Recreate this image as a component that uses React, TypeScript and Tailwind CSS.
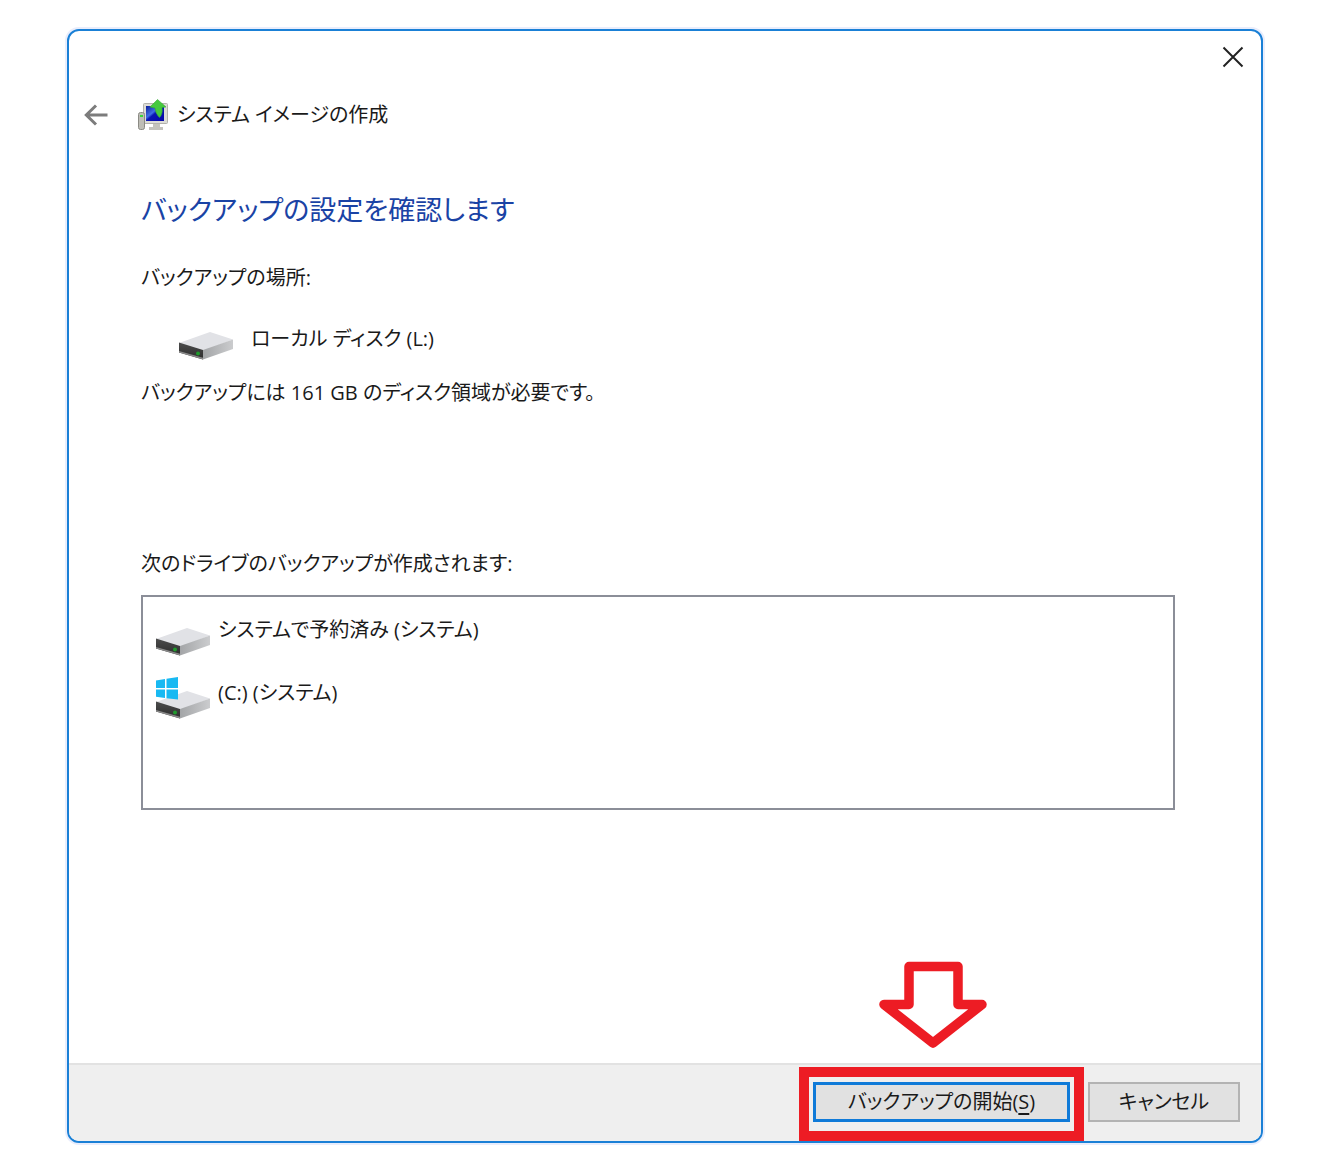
import type { ReactNode } from "react";

const DRIVES: { label: string; system: boolean }[] = [
  { label: "システムで予約済み (システム)", system: false },
  { label: "(C:) (システム)", system: true },
];

function DriveIcon({ system = false }: { system?: boolean }) {
  return (
    <svg viewBox="0 0 54 42" className="h-[42px] w-[54px] shrink-0" aria-hidden="true">
      <defs>
        <linearGradient id="drive-side" x1="0" y1="0" x2="1" y2="0">
          <stop offset="0" stopColor="#a3a5a7" />
          <stop offset="1" stopColor="#cbccce" />
        </linearGradient>
        <linearGradient id="drive-front" x1="0" y1="0" x2="0" y2="1">
          <stop offset="0" stopColor="#4c4c4c" />
          <stop offset="1" stopColor="#2c2c2c" />
        </linearGradient>
      </defs>
      <path d="M0 25 L31 14 L54 21.5 L24 33 Z" fill="#e1e2e6" />
      <path d="M24 32 L54 21.5 V31 L24 41.5 Z" fill="url(#drive-side)" />
      <path d="M0 24.500 L24 32 V41.500 L0 34.500 Z" fill="url(#drive-front)" />
      <path d="M0 34.500 L24 41.500 V39.800 L0 33 Z" fill="#8a8a8a" />
      <circle cx="19" cy="35.500" r="2" fill="#1f9a2c" />
      {system && (
        <g fill="#18b9f2">
          <path d="M0 3.500 L9 2 V11 H0 Z" />
          <path d="M10.500 1.800 L22 0 V11 H10.500 Z" />
          <path d="M0 12.500 H9 V21 L0 19.800 Z" />
          <path d="M10.500 12.500 H22 V22.500 L10.500 21.200 Z" />
        </g>
      )}
    </svg>
  );
}

function BackupIcon() {
  return (
    <svg viewBox="0 0 32 32" className="h-8 w-8 shrink-0" aria-hidden="true">
      <defs>
        <linearGradient id="screen" x1="0" y1="0" x2="1" y2="1">
          <stop offset="0" stopColor="#0a1a9a" />
          <stop offset="0.400" stopColor="#3f6fe6" />
          <stop offset="0.500" stopColor="#0a14b4" />
          <stop offset="1" stopColor="#0508a8" />
        </linearGradient>
      </defs>
      <rect x="6.500" y="4.500" width="24" height="20" rx="1" fill="#dcdcd6" stroke="#b3b2ac" />
      <rect x="9" y="7" width="18" height="15" fill="url(#screen)" />
      <path d="M16 25 H23 V28 H26 V31 H12 V28 H16 Z" fill="#c4c3bd" />
      <rect x="1.500" y="13.500" width="6" height="17" rx="2" fill="#bebdb6" stroke="#8b8a84" />
      <rect x="3" y="16" width="3" height="2" fill="#39d63a" />
      <path d="M20.500 0.500 L29 8 L25 8.500 Q26 15 22.500 18.500 Q18.500 15 18 9 L13 8 Z" fill="#45c93e" stroke="#38a834" strokeWidth="0.600" />
    </svg>
  );
}

function Line({ children }: { children: ReactNode }) {
  return <p className="text-[20px] leading-8">{children}</p>;
}

export default function App() {
  return (
    <div className="flex min-h-screen flex-col bg-white pt-[29px] pr-[77px] pb-[13px] pl-[67px] font-['Open_Sans','Noto_Sans_CJK_JP',sans-serif] text-[#1a1a1a] [font-feature-settings:'palt']">
      <div
        lang="ja"
        className="flex flex-1 flex-col overflow-hidden rounded-xl border-2 border-[#1a80d6] bg-white shadow-[0_0_0_2px_#e9edfc]"
      >
        <div className="flex justify-end px-4 pt-[14px]">
          <button type="button" aria-label="閉じる" className="flex h-6 w-6 items-center justify-center">
            <svg viewBox="0 0 24 24" className="h-6 w-6" fill="none" stroke="#222" strokeWidth="2">
              <path d="M2.500 2.500 L21.500 21.500 M21.500 2.500 L2.500 21.500" />
            </svg>
          </button>
        </div>

        <header className="mt-[30px] flex items-center px-[14px]">
          <button type="button" aria-label="戻る" className="mr-[26px] flex h-7 w-7 items-center justify-center">
            <svg viewBox="0 0 28 28" className="h-7 w-7" fill="none" stroke="#7c7c7c" strokeWidth="3">
              <path d="M24.500 14 H3.500 M13 4.500 L3.300 14 L13 23.500" />
            </svg>
          </button>
          <BackupIcon />
          <span className="ml-2 text-[20px] leading-8">システム イメージの作成</span>
        </header>

        <main className="flex flex-1 flex-col pr-[86px] pl-[72px]">
          <h1 className="mt-[59px] text-[27px] leading-10 text-[#1a43a5]">バックアップの設定を確認します</h1>
          <div className="mt-8">
            <Line>バックアップの場所:</Line>
          </div>
          <div className="mt-6 flex items-center gap-[18px] pl-[38px]">
            <DriveIcon />
            <Line>ローカル ディスク (L:)</Line>
          </div>
          <div className="mt-[17px]">
            <Line>バックアップには 161 GB のディスク領域が必要です。</Line>
          </div>

          <div className="mt-[139px]">
            <Line>次のドライブのバックアップが作成されます:</Line>
          </div>
          <ul className="mt-[15px] flex min-h-[215px] flex-col gap-[21px] border-2 border-[#8b8e98] px-[13px] pt-[17px]">
            {DRIVES.map((drive) => (
              <li key={drive.label} className="flex items-start gap-2">
                <DriveIcon system={drive.system} />
                <Line>{drive.label}</Line>
              </li>
            ))}
          </ul>
        </main>

        <footer className="flex items-baseline justify-end gap-1 border-t-2 border-[#e2e2e2] bg-[#efefef] pt-[2px] pr-[21px]">
          {/* red callout around the start button */}
          <div className="relative border-[10px] border-[#ed1c24] px-1 pt-[5px] pb-[9px]">
            <svg
              viewBox="0 0 110 88"
              className="absolute bottom-full left-1/2 mb-7 h-[88px] w-[110px] -translate-x-16"
              fill="none"
              stroke="#ed1c24"
              strokeWidth="9.500"
              strokeLinejoin="round"
              aria-hidden="true"
            >
              <path d="M31 5.500 H80 V43.500 H104 L55 82 L6 43.500 H31 Z" />
            </svg>
            <button
              type="button"
              className="h-10 w-[257px] border-[3px] border-[#0f7ad8] bg-[#e1e1e1] text-[20px] leading-8"
            >
              バックアップの開始(<span className="underline underline-offset-4">S</span>)
            </button>
          </div>
          <button type="button" className="h-10 w-[152px] border-2 border-[#b3b3b3] bg-[#e1e1e1] text-[20px] leading-8">
            キャンセル
          </button>
        </footer>
      </div>
    </div>
  );
}
